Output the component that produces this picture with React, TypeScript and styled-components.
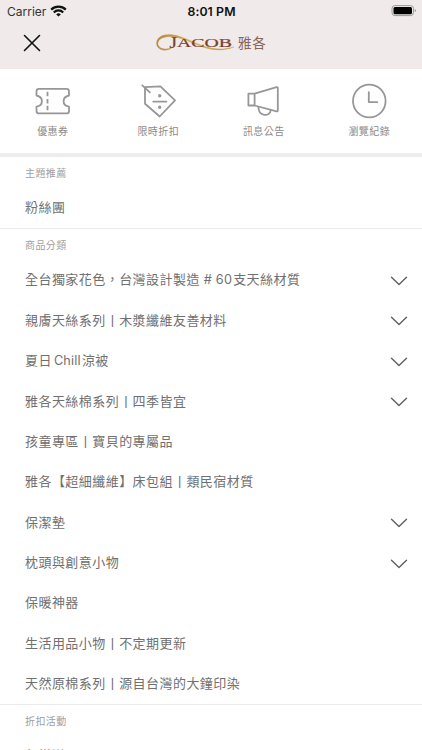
import React from "react";
import styled, { createGlobalStyle } from "styled-components";

const Global = createGlobalStyle`
  * { box-sizing: border-box; }
  html, body { margin: 0; height: 750px; overflow: hidden; background: #fff; }
`;
const Screen = styled.div`
  width: 422px; height: 750px; overflow: hidden; background: #fff;
  font-family: Inter, "Noto Sans CJK TC", sans-serif;
`;
const Header = styled.header`height: 69px; background: #f0eaea;`;
const StatusBar = styled.div`
  height: 22px; padding: 0 6px 0 7px; display: grid; grid-template-columns: 1fr auto 1fr;
  align-items: center; font-size: 12px; color: #111;
`;
const Carrier = styled.div`display: flex; align-items: center; gap: 4px; color: #333;`;
const Time = styled.div`font-weight: 600; font-size: 12.3px; letter-spacing: 0.1px; color: #111;`;
const Battery = styled.svg`justify-self: end; display: block;`;
const NavBar = styled.div`
  height: 42px; padding-left: 23px; display: grid; grid-template-columns: 133px 1fr; align-items: center;
`;
const Logo = styled.svg`display: block;`;
const Actions = styled.nav`
  height: 88px; display: grid; grid-template-columns: repeat(4, 1fr); border-bottom: 4px solid #ededed;
`;
const Action = styled.a`
  display: flex; flex-direction: column; align-items: center; padding-top: 13px;
  font-size: 10px; line-height: 16px; letter-spacing: 0.4px; color: #8b8b8b; gap: 4px;
`;
const ActionIcon = styled.svg`
  display: block; fill: none; stroke: #979797; stroke-width: 1.8; stroke-linecap: round; stroke-linejoin: round;
`;
const Section = styled.section`border-bottom: 1px solid #e9e9e9;`;
const SectionTitle = styled.h2`
  margin: 0; height: 31px; padding: 0 25px; font-size: 10px; line-height: 32px; font-weight: 400;
  letter-spacing: 0.4px; color: #a0a0a0;
`;
const Row = styled.div`
  height: 40.36px; padding: 0 14px 0 25px; display: flex; align-items: center; justify-content: space-between;
  font-size: 13px; line-height: 20px; letter-spacing: 0.45px; color: #707070; white-space: nowrap;
`;
const Label = styled.span`margin-bottom: 2px;`;
const Latin = styled.span<{ $gap?: number }>`
  font-size: 12.7px; letter-spacing: 0.2px; margin: 0 1px 0 ${(p) => p.$gap ?? 2}px;
`;
const Divider = styled.span`
  display: inline-block; width: 13.45px; text-align: center; letter-spacing: 0; font-size: 13px;
  line-height: 16px; vertical-align: 1px; font-family: "Liberation Sans", sans-serif;
`;
const Chevron = styled.svg`
  display: block; margin-top: 1px; fill: none; stroke: #606060; stroke-width: 1.4; stroke-linecap: round; stroke-linejoin: round;
`;

const actions = [
  { label: "優惠券", icon: <><path d="M4 6.8h27.5q2.5 0 2.5 2.5v4.2c-7.2 1.5-7.2 9.8 0 11.2v4.2q0 2.5-2.5 2.5H4q-2.5 0-2.5-2.5v-4.2c7.2-1.4 7.2-9.7 0-11.2V9.3Q1.5 6.8 4 6.8z" /><path d="M12.5 9.8v4.4M12.5 17v4.4M12.5 23.8v4.4" strokeLinecap="butt" /></> },
  { label: "限時折扣", icon: <><path d="M4 5.2 19.4 4.4 34 18.3 18.7 34.5 4 21.8z" /><path d="M1.3 3.3l7.6 7M12.2 19.6h13.2" /><circle cx="18.7" cy="13.8" r=".8" /><circle cx="18.7" cy="25.3" r=".8" /></> },
  { label: "訊息公告", icon: <><path d="M2.4 11.7h6.2v11.8H2.4zM8.6 11.7 30.6 5.1q1.2-.3 1.2.9v22.4q0 1.3-1.2 1L8.6 23.5" /><path d="M12.4 25c.2 9.8 11.6 10.2 12.4 3" /></> },
  { label: "瀏覽紀錄", icon: <><circle cx="17.3" cy="19" r="16.3" /><path d="M16.8 10.2v9.9h8.5" /></> },
];
const bar = <Divider>|</Divider>;
const categories: { name: React.ReactNode; open?: boolean }[] = [
  { name: <>全台獨家花色，台灣設計製造<Latin $gap={4}># 60</Latin>支天絲材質</>, open: true },
  { name: <>親膚天絲系列{bar}木漿纖維友善材料</>, open: true },
  { name: <>夏日<Latin>Chill</Latin>涼被</>, open: true },
  { name: <>雅各天絲棉系列{bar}四季皆宜</>, open: true },
  { name: <>孩童專區{bar}寶貝的專屬品</> },
  { name: <>雅各【超細纖維】床包組{bar}類民宿材質</> },
  { name: "保潔墊", open: true },
  { name: "枕頭與創意小物", open: true },
  { name: "保暖神器" },
  { name: <>生活用品小物{bar}不定期更新</> },
  { name: <>天然原棉系列{bar}源自台灣的大鐘印染</> },
];

export default function App() {
  return (
    <Screen>
      <Global />
      <Header>
        <StatusBar>
          <Carrier>Carrier
            <svg width="17" height="12" viewBox="0 0 17 12" fill="none" stroke="#111" strokeWidth="2.2">
              <path d="M1.2 4.6a10.4 10.4 0 0 1 14.6 0M3.8 7.4a6.6 6.6 0 0 1 9.4 0" />
              <path d="M8.5 11.6 6.2 9.4a3.4 3.4 0 0 1 4.6 0z" fill="#111" stroke="none" />
            </svg>
          </Carrier>
          <Time>8:01 PM</Time>
          <Battery width="25" height="12" viewBox="0 0 25 12">
            <rect x="1" y=".6" width="21.5" height="10" rx="3" fill="none" stroke="#999" />
            <rect x="2.5" y="2" width="18.5" height="7.2" rx="1.5" fill="#000" />
            <path d="M23.8 4v3.2q1-.6 1-1.6T23.8 4z" fill="#888" />
          </Battery>
        </StatusBar>
        <NavBar>
          <svg width="18" height="18" viewBox="0 0 18 18" fill="none" stroke="#111" strokeWidth="1.6" strokeLinecap="round"><path d="M1.5 1.5l15 15M16.5 1.5l-15 15" /></svg>
          <Logo width="114" height="24" viewBox="0 -1.5 114 24">
            <defs>
              <linearGradient id="gold" x1="0" x2="1"><stop stopColor="#b58a3e" /><stop offset=".5" stopColor="#d8b568" /><stop offset="1" stopColor="#b98a35" /></linearGradient>
              <linearGradient id="brown" x1="0" y1="0" x2="0" y2="1"><stop stopColor="#8a4f35" /><stop offset="1" stopColor="#6d3020" /></linearGradient>
            </defs>
            <path d="M18 13.5C13 20 1 19 .5 11 .8 2 12 .2 24 4c17 5.600 31 17 54 10.400-20 8.200-36-2.200-51-7.700C15 2.400 3 3.500 1.900 10.600 2 17.500 12 18 18 13.500z" fill="url(#gold)" stroke="url(#gold)" strokeWidth=".3" />
            <g fill="url(#brown)" stroke="#7a3c28" strokeWidth=".2" fontFamily="Liberation Serif, serif">
              <text x="13.5" y="15.5" fontSize="16" textLength="7.5" lengthAdjust="spacingAndGlyphs">J</text>
              <text x="21" y="14.5" fontSize="12.8" textLength="55" lengthAdjust="spacingAndGlyphs">ACOB</text>
            </g>
            <text x="82" y="15" fontSize="13.5" letterSpacing=".7" fill="#8a6455" fontFamily="Noto Sans CJK TC, sans-serif">雅各</text>
          </Logo>
        </NavBar>
      </Header>
      <Actions>
        {actions.map((a) => (
          <Action key={a.label}><ActionIcon width="35" height="37" viewBox="0 0 35 37">{a.icon}</ActionIcon>{a.label}</Action>
        ))}
      </Actions>
      <Section><SectionTitle>主題推薦</SectionTitle><Row><Label>粉絲團</Label></Row></Section>
      <Section>
        <SectionTitle>商品分類</SectionTitle>
        {categories.map((c, i) => (
          <Row key={i}><Label>{c.name}</Label>{c.open && <Chevron width="18" height="10" viewBox="0 0 18 10"><path d="M1.5 1.2 9 8.5l7.5-7.3" /></Chevron>}</Row>
        ))}
      </Section>
      <Section><SectionTitle>折扣活動</SectionTitle><Row><Label>任搭送</Label></Row></Section>
    </Screen>
  );
}
